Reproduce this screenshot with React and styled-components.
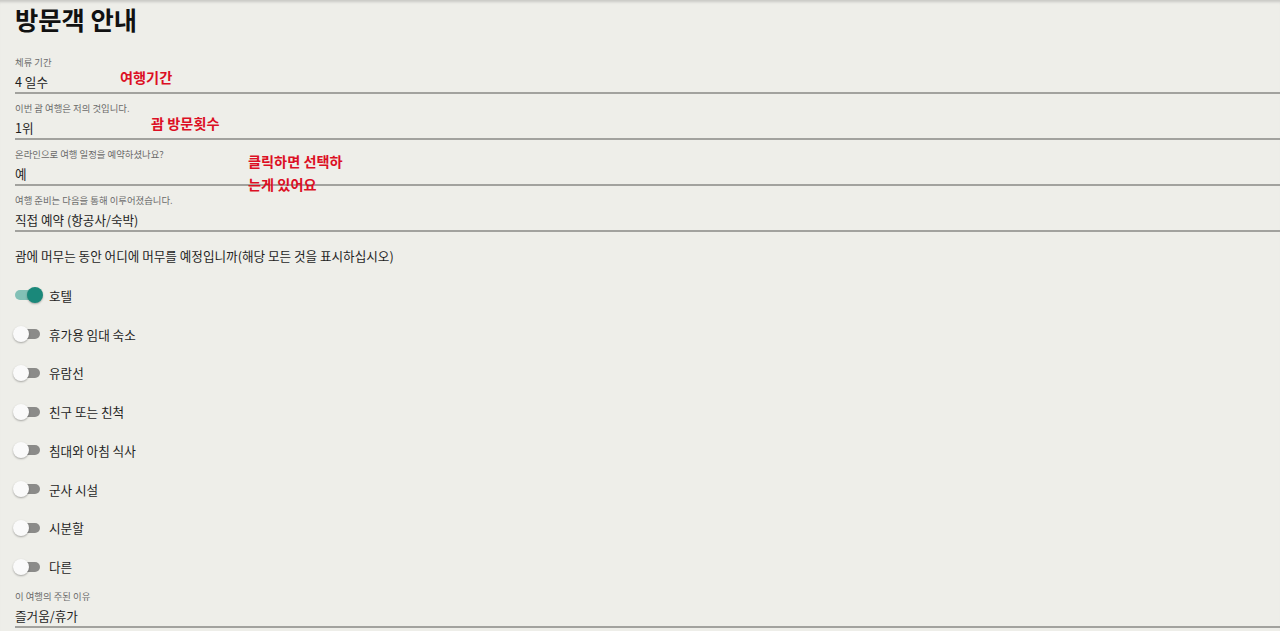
import React, { useState } from "react";
import styled, { createGlobalStyle } from "styled-components";

const Global = createGlobalStyle`
  html, body { margin: 0; padding: 0; background: #eeeee9; }
  body { font-family: "Noto Sans CJK KR", "Noto Sans", sans-serif; color: #1e1e1e; overflow: hidden; }
`;

const Page = styled.div`
  min-height: 631px;
  padding: 0 0 0 15px;
  box-shadow: inset 0 4px 3px -2px rgba(0, 0, 0, 0.16);
  display: flex;
  flex-direction: column;
`;

const Title = styled.h1`
  margin: 0 0 11px;
  padding-top: 1px;
  font-size: 25.3px;
  line-height: 36px;
  font-weight: 700;
  color: #111;
`;

const Form = styled.div`
  position: relative;
  display: flex;
  flex-direction: column;
`;

const Field = styled.div`
  display: flex;
  flex-direction: column;
  gap: 2px;
  padding-top: ${(p) => (p.$tight ? "3px" : "7px")};
  border-bottom: 2px solid #a2a29e;
`;

const Label = styled.div`
  font-size: 9.4px;
  line-height: 14px;
  color: #6a6a6a;
`;

const Value = styled.div`
  font-size: 12.6px;
  line-height: 21px;
  color: #1e1e1e;
`;

const Question = styled.div`
  margin-top: 14px;
  margin-bottom: 10px;
  font-size: 12.6px;
  line-height: 20px;
  color: #1e1e1e;
`;

const ToggleList = styled.div`
  display: flex;
  flex-direction: column;
`;

const ToggleRow = styled.label`
  display: flex;
  align-items: center;
  gap: 9px;
  height: 38.75px;
  cursor: pointer;
  font-size: 12.6px;
`;

const Track = styled.span`
  position: relative;
  width: 25px;
  height: 10px;
  border-radius: 5px;
  background: ${(p) => (p.$on ? "#82c0b6" : "#8b8b89")};
  flex-shrink: 0;
`;

const Knob = styled.span`
  position: absolute;
  top: -3px;
  left: ${(p) => (p.$on ? "12px" : "-2px")};
  width: 16px;
  height: 16px;
  border-radius: 50%;
  background: ${(p) => (p.$on ? "#1a887a" : "#fafafa")};
  box-shadow: 0 1px 2px rgba(0, 0, 0, 0.3);
`;

const Note = styled.div`
  position: absolute;
  left: ${(p) => p.$x}px;
  top: ${(p) => p.$y}px;
  color: #dc0f24;
  font-weight: 700;
  font-size: 14.2px;
  line-height: 23px;
  white-space: nowrap;
`;

const fields = [
  ["체류 기간", "4 일수"],
  ["이번 괌 여행은 저의 것입니다.", "1위"],
  ["온라인으로 여행 일정을 예약하셨나요?", "예"],
  ["여행 준비는 다음을 통해 이루어졌습니다.", "직접 예약 (항공사/숙박)"],
];

const options = [
  "호텔",
  "휴가용 임대 숙소",
  "유람선",
  "친구 또는 친척",
  "침대와 아침 식사",
  "군사 시설",
  "시분할",
  "다른",
];

function Toggle({ label, on, onChange }) {
  return (
    <ToggleRow onClick={onChange}>
      <Track $on={on}>
        <Knob $on={on} />
      </Track>
      {label}
    </ToggleRow>
  );
}

export default function App() {
  const [sel, setSel] = useState({ 0: true });
  return (
    <>
      <Global />
      <Page>
        <Title>방문객 안내</Title>
        <Form>
          {fields.map(([l, v]) => (
            <Field key={l}>
              <Label>{l}</Label>
              <Value>{v}</Value>
            </Field>
          ))}
          <Question>괌에 머무는 동안 어디에 머무를 예정입니까(해당 모든 것을 표시하십시오)</Question>
          <ToggleList>
            {options.map((o, i) => (
              <Toggle
                key={o}
                label={o}
                on={!!sel[i]}
                onChange={() => setSel((s) => ({ ...s, [i]: !s[i] }))}
              />
            ))}
          </ToggleList>
          <Field $tight>
            <Label>이 여행의 주된 이유</Label>
            <Value>즐거움/휴가</Value>
          </Field>
          <Note $x={105} $y={18}>여행기간</Note>
          <Note $x={136} $y={64}>괌 방문횟수</Note>
          <Note $x={233} $y={102}>클릭하면 선택하</Note>
          <Note $x={233} $y={125}>는게 있어요</Note>
        </Form>
      </Page>
    </>
  );
}
